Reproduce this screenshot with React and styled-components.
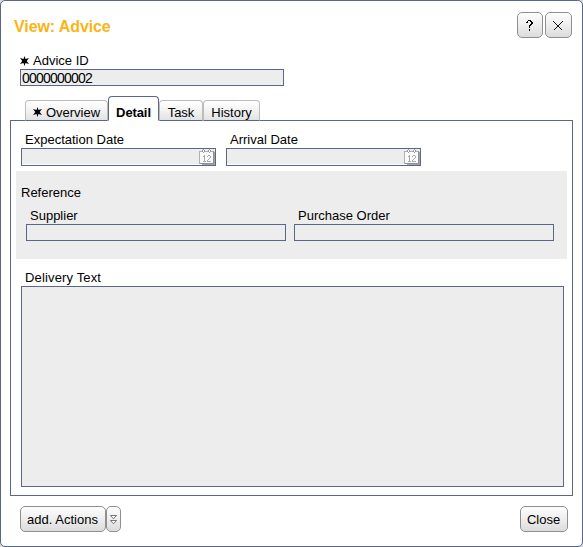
import React from 'react';
import styled, { createGlobalStyle, css } from 'styled-components';

const line = '#5c6785';
const field = '#ededed';

const Global = createGlobalStyle`
  * { box-sizing: border-box; }
  html, body { margin: 0; background: #d8dae0; }
  body, button, input { font: 13px/15px "Liberation Sans", Arial, sans-serif; color: #000; }
`;

const Dialog = styled.main`
  display: flex;
  flex-direction: column;
  width: 583px;
  height: 547px;
  padding: 11px 10px 14px 9px;
  background: #fff;
  border: 1px solid ${line};
  border-radius: 5px;
  overflow: hidden;
`;

const Header = styled.header`
  display: flex;
  justify-content: space-between;
  height: 45px;
  padding-left: 4px;
`;

const Title = styled.h1`
  margin: 5px 0 0;
  font-size: 16px;
  line-height: 20px;
  letter-spacing: -0.1px;
  color: #fbb415;
`;

const Row = styled.div`
  display: flex;
  gap: ${(p) => p.$gap || 0}px;
`;

const Button = styled.button`
  display: flex;
  align-items: center;
  justify-content: center;
  width: ${(p) => p.$width}px;
  height: 26px;
  padding: 1px 1px 0 0;
  white-space: nowrap;
  border: 1px solid #8f8f8f;
  border-radius: 5px;
  background: linear-gradient(#fdfdfd, #eeeeee 50%, #dcdcdc);
`;

const Field = styled.label`
  display: flex;
  flex-direction: column;
  width: ${(p) => p.$width}px;
`;

const Caption = styled.span`
  display: flex;
  align-items: center;
  height: 15px;
  margin-bottom: 1px;
  padding-left: 4px;
  white-space: nowrap;
  letter-spacing: ${(p) => p.$spacing || 0}px;
`;

const Input = styled.input`
  width: 100%;
  height: 17px;
  margin: 0;
  padding: 0 1px;
  border: 1px solid ${line};
  border-radius: 0;
  background: ${field};
  font-size: 14px;
  letter-spacing: -0.79px;
  outline: none;
`;

const DateBox = styled.span`
  display: flex;
  justify-content: flex-end;
  height: 18px;
  border: 1px solid ${line};
  background: ${field};
  box-shadow: inset 0 -1px #fff;
`;

const IdField = styled(Field)`
  margin: 0 0 10px 10px;
  ${Caption} { padding-left: 0; }
`;

const Tabs = styled.nav`
  position: relative;
  display: flex;
  align-items: flex-end;
  height: 25px;
  margin: 0 0 -1px 15px;
`;

const Tab = styled.div`
  display: flex;
  align-items: center;
  justify-content: center;
  width: ${(p) => p.$width}px;
  height: 21px;
  padding-top: 3px;
  white-space: nowrap;
  border: 1px solid #bcbcbc;
  border-bottom-color: ${line};
  border-radius: 4px 4px 0 0;
  background: linear-gradient(#fff, #f3f3f3 50%, #e2e2e2);
  ${(p) => p.$active && css`
    height: 25px;
    padding-top: 7px;
    font-weight: bold;
    letter-spacing: -0.1px;
    border-color: ${line};
    border-bottom-color: #fff;
    background: #fff;
  `}
`;

const Panel = styled.section`
  width: 563px;
  height: 376px;
  padding: 11px 5px 8px;
  border: 1px solid ${line};
`;

const Dates = styled(Row)`
  padding-left: 5px;
`;

const Reference = styled.div`
  width: 551px;
  height: 88px;
  margin: 5px 0 11px;
  padding: 14px 0 0 10px;
  background: ${field};
`;

const GroupName = styled.div`
  margin: 0 0 8px -5px;
`;

const Delivery = styled(Field)`
  margin-left: 5px;
`;

const TextArea = styled.span`
  height: 201px;
  border: 1px solid ${line};
  background: ${field};
`;

const Footer = styled.footer`
  display: flex;
  justify-content: space-between;
  margin-top: 10px;
  padding: 0 4px 0 10px;
`;

const Required = styled.svg`
  flex: none;
  width: 9px;
  height: 10px;
  margin-right: 4px;
`;

const Icon = styled.svg`
  display: block;
  flex: none;
`;

const Star = () => (
  <Required viewBox="0 0 9 10">
    <path d="M4.5 0 L5.5 3 L9 2.1 L6.7 5 L9 7.9 L5.5 7 L4.5 10 L3.5 7 L0 7.9 L2.3 5 L0 2.1 L3.5 3Z" />
  </Required>
);

const Calendar = () => (
  <Icon width="16" height="16" viewBox="0 0 16 16" shapeRendering="crispEdges">
    <path d="M15 3h1v13H3v-1h12z" fill="#a4a4a4" />
    <path d="M.5 2.5h14v12H.5z" fill="#fafafa" stroke="#b0b0b0" />
    <path d="M14.5 2v12.5H1" fill="none" stroke="#8f8f8f" />
    <path d="M3 1h3v3H3zM9 1h3v3H9z" fill="#fff" />
    <path d="M4 0h1v1H4zM3 1h1v2H3zM5 1h1v2H5zM4 3h1v1H4zM10 0h1v1h-1zM9 1h1v2H9zM11 1h1v2h-1zM10 3h1v1h-1z" fill="#999" />
    <path d="M5 6h1v6H5zM4 7h1v1H4zM4 12h3v1H4zM8 7h1v1H8zM9 6h2v1H9zM11 7h1v2h-1zM10 9h1v1h-1zM9 10h1v1H9zM8 11h1v1H8zM8 12h4v1H8z" fill="#aaa" />
  </Icon>
);

const DateField = ({ label }) => (
  <Field $width={195}>
    <Caption>{label}</Caption>
    <DateBox><Calendar /></DateBox>
  </Field>
);

export default function App() {
  return (
    <>
      <Global />
      <Dialog>
        <Header>
          <Title>View: Advice</Title>
          <Row $gap={2}>
            <Button $width={26} aria-label="Help">
              <Icon width="7" height="11" viewBox="0 0 7 11" shapeRendering="crispEdges">
                <path d="M2 0h3v1H2zM1 1h1v1H1zM5 1h1v1H5zM0 2h2v1H0zM5 2h2v2H5zM5 4h1v1H5zM4 5h1v1H4zM3 6h1v2H3zM3 9h1v2H3zM4 1h1v1H4zM4 4h1v1H4zM3 5h1v1H3z" />
              </Icon>
            </Button>
            <Button $width={27} aria-label="Close dialog">
              <Icon width="10" height="10" viewBox="0 0 10 10">
                <path d="M.5 .5l9 9M9.5 .5l-9 9" stroke="#111" shapeRendering="crispEdges" />
              </Icon>
            </Button>
          </Row>
        </Header>

        <IdField $width={264}>
          <Caption><Star />Advice ID</Caption>
          <Input readOnly value="0000000002" />
        </IdField>

        <Tabs>
          <Tab $width={83}><Star />Overview</Tab>
          <Tab $width={51} $active>Detail</Tab>
          <Tab $width={44}>Task</Tab>
          <Tab $width={57}>History</Tab>
        </Tabs>

        <Panel>
          <Dates $gap={10}>
            <DateField label="Expectation Date" />
            <DateField label="Arrival Date" />
          </Dates>
          <Reference>
            <GroupName>Reference</GroupName>
            <Row $gap={8}>
              <Field $width={260}>
                <Caption>Supplier</Caption>
                <Input readOnly />
              </Field>
              <Field $width={260}>
                <Caption>Purchase Order</Caption>
                <Input readOnly />
              </Field>
            </Row>
          </Reference>
          <Delivery $width={543}>
            <Caption $spacing={0.15}>Delivery Text</Caption>
            <TextArea />
          </Delivery>
        </Panel>

        <Footer>
          <Row>
            <Button $width={86}>add. Actions</Button>
            <Button $width={15} aria-label="More actions">
              <Icon width="7" height="10" viewBox="0 0 7 10">
                <path d="M.5 .5h6L3.5 3.8zM.5 5.5h6L3.5 8.8z" fill="#fff" stroke="#555" strokeWidth=".8" />
              </Icon>
            </Button>
          </Row>
          <Button $width={48}>Close</Button>
        </Footer>
      </Dialog>
    </>
  );
}
